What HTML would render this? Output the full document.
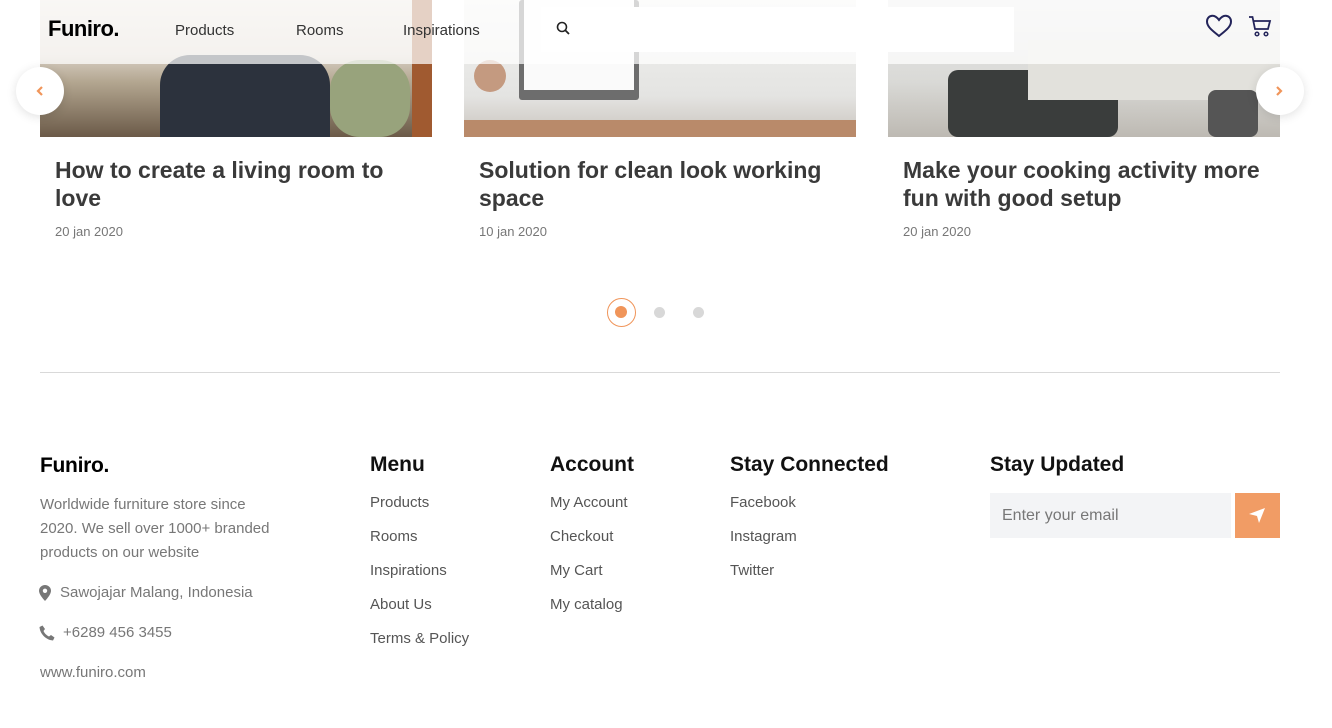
<!DOCTYPE html>
<html><head><meta charset="utf-8"><style>
*{margin:0;padding:0;box-sizing:border-box}
body{width:1332px;height:728px;background:#fff;font-family:"Liberation Sans",sans-serif;position:relative;overflow:hidden;color:#333}
.a{position:absolute}
.img{position:absolute;top:0;height:137px;width:392px;overflow:hidden}
.t{position:absolute;top:156px;font-size:23px;font-weight:bold;color:#3a3a3a;line-height:28px;width:360px}
.d{position:absolute;top:224px;font-size:13px;color:#777}
h4{position:absolute;top:453px;font-size:21px;font-weight:bold;color:#111}
.l{position:absolute;font-size:15px;color:#555}
.nav{position:absolute;top:21px;font-size:15px;color:#333}
</style></head><body>
<div class="img" style="left:40px;background:linear-gradient(180deg,#e8e2da 0,#d8cfc4 40%,#b3a690 60%,#6b5a48 100%)">
 <div class="a" style="left:120px;top:55px;width:170px;height:82px;background:#2c323d;border-radius:30px 30px 0 0"></div>
 <div class="a" style="left:290px;top:60px;width:80px;height:77px;background:#98a37c;border-radius:30px"></div>
 <div class="a" style="left:372px;top:0;width:20px;height:137px;background:#a05a30"></div>
</div>
<div class="img" style="left:464px;background:linear-gradient(180deg,#f2f2f0 0,#e4e4e2 70%,#c9c3bc 100%)">
 <div class="a" style="left:55px;top:0;width:120px;height:100px;background:#6d6d6d;border-radius:3px"></div>
 <div class="a" style="left:60px;top:0;width:110px;height:90px;background:#fafafa"></div>
 <div class="a" style="left:0;top:120px;width:392px;height:17px;background:#b98a6a"></div>
 <div class="a" style="left:10px;top:60px;width:32px;height:32px;background:#c49a80;border-radius:50%"></div>
</div>
<div class="img" style="left:888px;background:linear-gradient(180deg,#eaeaea 0,#d9d9d6 60%,#bdb9b2 100%)">
 <div class="a" style="left:60px;top:70px;width:170px;height:67px;background:#3a3d3c;border-radius:10px"></div>
 <div class="a" style="left:140px;top:40px;width:252px;height:60px;background:#e2e1dc"></div>
 <div class="a" style="left:320px;top:90px;width:50px;height:47px;background:#555;border-radius:8px"></div>
</div>
<div class="a" style="left:40px;top:0;width:1240px;height:64px;background:rgba(255,255,255,0.72)"></div>
<div class="a" style="left:48px;top:16px;font-size:22px;font-weight:bold;color:#000;letter-spacing:-0.5px">Funiro.</div>
<div class="nav" style="left:175px;top:22px">Products</div>
<div class="nav" style="left:296px;top:22px">Rooms</div>
<div class="nav" style="left:403px;top:22px">Inspirations</div>
<div class="a" style="left:541px;top:7px;width:473px;height:45px;background:#fff"></div>
<svg class="a" style="left:556px;top:21px" width="15" height="15" viewBox="0 0 15 15"><circle cx="6" cy="6" r="4.5" fill="none" stroke="#222" stroke-width="1.6"/><path d="M9.5 9.5L13 13" stroke="#222" stroke-width="1.8"/></svg>
<svg class="a" style="left:1205px;top:14px" width="28" height="24" viewBox="0 0 28 24"><path d="M14 22C8 17 2 13 2 7.5 2 4 4.5 1.8 7.5 1.8 10.5 1.8 12.5 4 14 6 15.5 4 17.5 1.8 20.5 1.8 23.5 1.8 26 4 26 7.5 26 13 20 17 14 22Z" fill="none" stroke="#23245a" stroke-width="2"/></svg>
<svg class="a" style="left:1248px;top:15px" width="24" height="23" viewBox="0 0 24 23"><path d="M1 2H4.5L7 14H20L22 6H6" fill="none" stroke="#23245a" stroke-width="1.8"/><circle cx="9" cy="19" r="1.8" fill="none" stroke="#23245a" stroke-width="1.5"/><circle cx="18" cy="19" r="1.8" fill="none" stroke="#23245a" stroke-width="1.5"/></svg>
<div class="a" style="left:16px;top:67px;width:48px;height:48px;border-radius:50%;background:#fff;box-shadow:0 2px 10px rgba(0,0,0,.12)"></div>
<svg class="a" style="left:35px;top:85px" width="10" height="12"><path d="M7 2L3 6 7 10" fill="none" stroke="#f0955a" stroke-width="2.2"/></svg>
<div class="a" style="left:1256px;top:67px;width:48px;height:48px;border-radius:50%;background:#fff;box-shadow:0 2px 10px rgba(0,0,0,.12)"></div>
<svg class="a" style="left:1274px;top:85px" width="10" height="12"><path d="M3 2L7 6 3 10" fill="none" stroke="#f0955a" stroke-width="2.2"/></svg>
<div class="t" style="left:55px">How to create a living room to love</div>
<div class="d" style="left:55px">20 jan 2020</div>
<div class="t" style="left:479px">Solution for clean look working space</div>
<div class="d" style="left:479px">10 jan 2020</div>
<div class="t" style="left:903px;width:370px">Make your cooking activity more fun with good setup</div>
<div class="d" style="left:903px">20 jan 2020</div>
<div class="a" style="left:607px;top:298px;width:29px;height:29px;border-radius:50%;border:1px solid #f0955a"></div>
<div class="a" style="left:615px;top:306px;width:12px;height:12px;border-radius:50%;background:#f0955a"></div>
<div class="a" style="left:654px;top:307px;width:11px;height:11px;border-radius:50%;background:#d8d8d8"></div>
<div class="a" style="left:693px;top:307px;width:11px;height:11px;border-radius:50%;background:#d8d8d8"></div>
<div class="a" style="left:40px;top:372px;width:1240px;height:1px;background:#d9d9d9"></div>
<div class="a" style="left:40px;top:454px;font-size:21px;font-weight:bold;color:#000;letter-spacing:-0.3px">Funiro.</div>
<div class="l" style="left:40px;top:493px;line-height:24px;white-space:nowrap;color:#777">Worldwide furniture store since<br>2020. We sell over 1000+ branded<br>products on our website</div>
<svg class="a" style="left:39px;top:585px" width="12" height="16" viewBox="0 0 12 16"><path d="M6 0C2.7 0 0 2.6 0 5.8 0 10 6 16 6 16S12 10 12 5.8C12 2.6 9.3 0 6 0Z" fill="#777"/><circle cx="6" cy="5.8" r="2.2" fill="#fff"/></svg>
<div class="l" style="left:60px;top:584px;color:#777">Sawojajar Malang, Indonesia</div>
<svg class="a" style="left:39px;top:625px" width="16" height="16" viewBox="0 0 16 16"><path d="M3.5 0.5L6 4 4.5 6C5.5 8.3 7.7 10.5 10 11.5L12 10 15.5 12.5 14 15.5C7 15 1 9 0.5 2Z" fill="#777"/></svg>
<div class="l" style="left:63px;top:624px;color:#777">+6289 456 3455</div>
<div class="l" style="left:40px;top:664px;color:#777">www.funiro.com</div>
<h4 style="left:370px">Menu</h4>
<div class="l" style="left:370px;top:494px">Products</div>
<div class="l" style="left:370px;top:528px">Rooms</div>
<div class="l" style="left:370px;top:562px">Inspirations</div>
<div class="l" style="left:370px;top:596px">About Us</div>
<div class="l" style="left:370px;top:630px">Terms &amp; Policy</div>
<h4 style="left:550px">Account</h4>
<div class="l" style="left:550px;top:494px">My Account</div>
<div class="l" style="left:550px;top:528px">Checkout</div>
<div class="l" style="left:550px;top:562px">My Cart</div>
<div class="l" style="left:550px;top:596px">My catalog</div>
<h4 style="left:730px">Stay Connected</h4>
<div class="l" style="left:730px;top:494px">Facebook</div>
<div class="l" style="left:730px;top:528px">Instagram</div>
<div class="l" style="left:730px;top:562px">Twitter</div>
<h4 style="left:990px">Stay Updated</h4>
<div class="a" style="left:990px;top:493px;width:241px;height:45px;background:#f3f4f6"></div>
<div class="a" style="left:1002px;top:507px;font-size:16px;color:#777">Enter your email</div>
<div class="a" style="left:1235px;top:493px;width:45px;height:45px;background:#f19c65"></div>
<svg class="a" style="left:1248px;top:507px" width="18" height="17" viewBox="0 0 18 17"><path d="M1 7L17 1 11 16 9 9Z" fill="#fff"/></svg>
</body></html>
